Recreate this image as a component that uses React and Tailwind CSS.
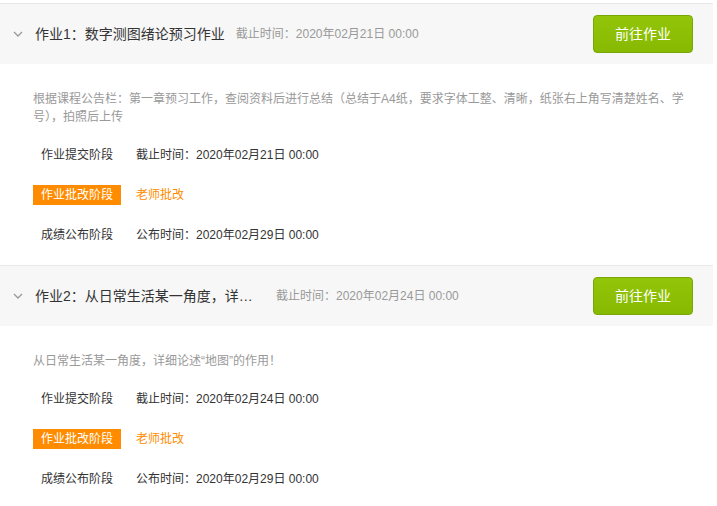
import React from 'react';

const homeworks = [
  {
    id: 1,
    title: '作业1：数字测图绪论预习作业',
    deadline: '2020年02月21日 00:00',
    desc: '根据课程公告栏：第一章预习工作，查阅资料后进行总结（总结于A4纸，要求字体工整、清晰，纸张右上角写清楚姓名、学号），拍照后上传',
    publish: '2020年02月29日 00:00',
  },
  {
    id: 2,
    title: '作业2：从日常生活某一角度，详细论述“地图”的作用！',
    deadline: '2020年02月24日 00:00',
    desc: '从日常生活某一角度，详细论述“地图”的作用！',
    publish: '2020年02月29日 00:00',
  },
];

function Chevron() {
  return (
    <svg width="10" height="6" viewBox="0 0 10 6" className="shrink-0">
      <polyline points="1,1 5,5 9,1" fill="none" stroke="#999" strokeWidth="1.3" />
    </svg>
  );
}

function HomeworkItem({ hw }) {
  return (
    <div className="border-t border-[#e8e8e8]">
      <div className="flex items-center h-[60px] bg-[#f7f7f7] pl-[13px] pr-[20px]">
        <Chevron />
        <span className="ml-[12px] max-w-[230px] truncate text-[14px] text-[#333]">{hw.title}</span>
        <span className="ml-[11px] shrink-0 text-[12px] text-[#999]">截止时间：{hw.deadline}</span>
        <button className="ml-auto w-[100px] h-[38px] rounded-[4px] border border-[#78a707] bg-gradient-to-b from-[#93c50a] to-[#86b900] text-white text-[14px]">
          前往作业
        </button>
      </div>
      <div className="pl-[33px] pr-[26px] pt-[26px] pb-[10px]">
        <p className="text-[12px] leading-[18px] text-[#999]">{hw.desc}</p>
        <div className="mt-[9px] text-[12px]">
          <div className="flex items-center h-[40px]">
            <span className="w-[88px] px-[8px] text-[#333]">作业提交阶段</span>
            <span className="ml-[15px] text-[#333]">截止时间：{hw.deadline}</span>
          </div>
          <div className="flex items-center h-[40px]">
            <span className="w-[88px] h-[20px] leading-[20px] px-[8px] bg-[#ff8c00] text-white">作业批改阶段</span>
            <span className="ml-[15px] text-[#ff8c00]">老师批改</span>
          </div>
          <div className="flex items-center h-[40px]">
            <span className="w-[88px] px-[8px] text-[#333]">成绩公布阶段</span>
            <span className="ml-[15px] text-[#333]">公布时间：{hw.publish}</span>
          </div>
        </div>
      </div>
    </div>
  );
}

export default function App() {
  return (
    <div className="w-[717px] h-[506px] bg-white overflow-hidden" style={{ fontFamily: '"Liberation Sans", "Noto Sans CJK SC", sans-serif' }}>
      <div className="w-[713px] mt-[3px]">
        {homeworks.map((hw) => (
          <HomeworkItem key={hw.id} hw={hw} />
        ))}
      </div>
    </div>
  );
}
